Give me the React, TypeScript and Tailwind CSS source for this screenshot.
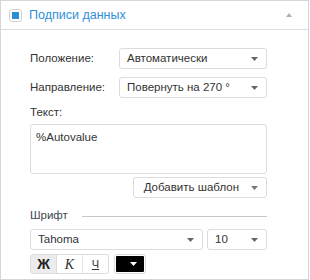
import React from 'react';

const font = { fontFamily: '"Liberation Sans", Arial, sans-serif' };

function Caret({ className = '' }: { className?: string }) {
  return (
    <svg width="7" height="4" viewBox="0 0 7 4" className={className}>
      <path d="M0 0h7L3.5 4z" fill="currentColor" />
    </svg>
  );
}

function Select({ value, className = '' }: { value: string; className?: string }) {
  return (
    <div
      className={`h-[21px] flex items-center justify-between rounded-[3px] border border-[#dcdcdc] bg-white pl-[7px] pr-[8px] text-[11.5px] text-[#333] whitespace-nowrap ${className}`}
    >
      <span>{value}</span>
      <Caret className="text-[#666]" />
    </div>
  );
}

export default function App() {
  return (
    <div style={font} className="w-[310px] h-[280px] bg-white">
      <div className="w-[309px] h-[280px] border border-[#d6d6da] flex flex-col">
        {/* заголовок */}
        <div className="h-[29px] shrink-0 flex items-center border-b border-[#dcdce0] pl-[8px] pr-[16px]">
          <div className="w-[13px] h-[13px] rounded-[3px] border border-[#d4d4d4] flex items-center justify-center">
            <div className="w-[7px] h-[7px] bg-[#2b8fd6]" />
          </div>
          <span className="ml-[7px] text-[12.5px] text-[#2f8fd6]">Подписи данных</span>
          <svg width="6" height="4" viewBox="0 0 6 4" className="ml-auto text-[#b0b0b0]">
            <path d="M3 0L6 4H0z" fill="currentColor" />
          </svg>
        </div>

        <div className="pl-[29px] pt-[18px] w-[266px] flex flex-col text-[11.5px] text-[#333] whitespace-nowrap">
          <div className="flex items-center">
            <span className="w-[89px]">Положение:</span>
            <Select value="Автоматически" className="flex-1" />
          </div>
          <div className="flex items-center mt-[8px]">
            <span className="w-[89px]">Направление:</span>
            <Select value="Повернуть на 270 °" className="flex-1" />
          </div>

          <div className="mt-[6px] h-[16px] leading-[16px]">Текст:</div>
          <div className="mt-[4px] h-[50px] rounded-[3px] border border-[#dcdcdc] px-[5px] pt-[4px]">
            %Autovalue
          </div>

          <div className="mt-[3px] flex justify-end">
            <div className="w-[134px] h-[21px] flex items-center justify-end gap-[12px] rounded-[3px] border border-[#dcdcdc] pr-[8px]">
              <span>Добавить шаблон</span>
              <Caret className="text-[#777]" />
            </div>
          </div>

          <div className="mt-[10px] flex items-center h-[16px]">
            <span className="text-[#3d4451]">Шрифт</span>
            <div className="ml-[14px] flex-1 h-px bg-[#c8c8c8]" />
          </div>

          <div className="mt-[5px] flex gap-[4px]">
            <Select value="Tahoma" className="w-[173px]" />
            <Select value="10" className="flex-1" />
          </div>

          <div className="mt-[4px] flex gap-[5px]">
            <div className="flex h-[20px] rounded-[3px] border border-[#dcdcdc] overflow-hidden">
              <div className="w-[26px] flex items-center justify-center bg-[#ececec] border-r border-[#dcdcdc] font-bold text-[14px] text-[#222]">
                Ж
              </div>
              <div className="w-[26px] flex items-center justify-center border-r border-[#e4e4e4] italic text-[14px] text-[#333]" style={{ fontFamily: '"Liberation Serif", serif' }}>
                К
              </div>
              <div className="w-[25px] flex items-center justify-center text-[11px] underline text-[#333]">
                Ч
              </div>
            </div>
            <div className="w-[32px] h-[20px] rounded-[3px] border border-[#dcdcdc] p-px">
              <div className="w-full h-full bg-black rounded-[1px] flex items-center justify-end pr-[7px]">
                <Caret className="text-white" />
              </div>
            </div>
          </div>
        </div>
      </div>
    </div>
  );
}
